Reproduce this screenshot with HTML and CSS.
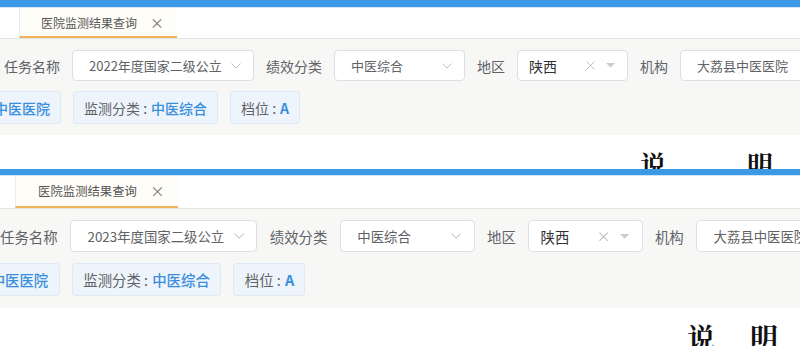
FILE: index.html
```html
<!DOCTYPE html>
<html lang="zh-CN">
<head>
    <meta charset="UTF-8">
    <meta name="viewport" content="width=device-width, initial-scale=1.0">
    <title>医院监测结果查询</title>
    <link rel="stylesheet" href="styles.css">
</head>
<body>
    <!-- 2022 -->
    <section class="panel panel-a">
        <div class="topbar"></div>
        <div class="tabbar">
            <div class="tab"><span>医院监测结果查询</span><span class="tab-close">×</span></div>
        </div>
        <div class="query">
            <div class="filters">
                <label class="filter-label">任务名称</label>
                <div class="select select-task">
                    <span class="select-value">2022年度国家二级公立</span>
                    <svg class="chevron" width="10" height="6" viewBox="0 0 10 6"><polyline points="0.5,0.5 5,5 9.5,0.5"/></svg>
                </div>
                <label class="filter-label">绩效分类</label>
                <div class="select select-type">
                    <span class="select-value">中医综合</span>
                    <svg class="chevron" width="10" height="6" viewBox="0 0 10 6"><polyline points="0.5,0.5 5,5 9.5,0.5"/></svg>
                </div>
                <label class="filter-label">地区</label>
                <div class="select select-area">
                    <span class="select-value is-set">陕西</span>
                    <svg class="clear" width="9" height="9" viewBox="0 0 9 9"><line x1="0.5" y1="0.5" x2="8.5" y2="8.5"/><line x1="8.5" y1="0.5" x2="0.5" y2="8.5"/></svg>
                    <svg class="caret" width="9" height="5" viewBox="0 0 9 5"><polygon points="0,0 9,0 4.5,4.5"/></svg>
                </div>
                <label class="filter-label">机构</label>
                <div class="select select-org">
                    <span class="select-value">大荔县中医医院</span>
                </div>
            </div>
            <div class="tags">
                <span class="tag">机构 : <b>大荔县中医医院</b></span>
                <span class="tag">监测分类 : <b>中医综合</b></span>
                <span class="tag">档位 : <b class="grade">A</b></span>
            </div>
        </div>
        <div class="notes"><span>说</span><span>明</span></div>
    </section>

    <!-- 2023 -->
    <section class="panel panel-b">
        <div class="topbar"></div>
        <div class="tabbar">
            <div class="tab"><span>医院监测结果查询</span><span class="tab-close">×</span></div>
        </div>
        <div class="query">
            <div class="filters">
                <label class="filter-label">任务名称</label>
                <div class="select select-task">
                    <span class="select-value">2023年度国家二级公立</span>
                    <svg class="chevron" width="10" height="6" viewBox="0 0 10 6"><polyline points="0.5,0.5 5,5 9.5,0.5"/></svg>
                </div>
                <label class="filter-label">绩效分类</label>
                <div class="select select-type">
                    <span class="select-value">中医综合</span>
                    <svg class="chevron" width="10" height="6" viewBox="0 0 10 6"><polyline points="0.5,0.5 5,5 9.5,0.5"/></svg>
                </div>
                <label class="filter-label">地区</label>
                <div class="select select-area">
                    <span class="select-value is-set">陕西</span>
                    <svg class="clear" width="9" height="9" viewBox="0 0 9 9"><line x1="0.5" y1="0.5" x2="8.5" y2="8.5"/><line x1="8.5" y1="0.5" x2="0.5" y2="8.5"/></svg>
                    <svg class="caret" width="9" height="5" viewBox="0 0 9 5"><polygon points="0,0 9,0 4.5,4.5"/></svg>
                </div>
                <label class="filter-label">机构</label>
                <div class="select select-org">
                    <span class="select-value">大荔县中医医院</span>
                </div>
            </div>
            <div class="tags">
                <span class="tag">机构 : <b>大荔县中医医院</b></span>
                <span class="tag">监测分类 : <b>中医综合</b></span>
                <span class="tag">档位 : <b class="grade">A</b></span>
            </div>
        </div>
        <div class="notes"><span>说</span><span>明</span></div>
    </section>
</body>
</html>
```

FILE: styles.css
```css
* {
    margin: 0;
    padding: 0;
    box-sizing: border-box;
}
body {
    width: 800px;
    height: 346px;
    overflow: hidden;
    background: white;
    font-family: 'Noto Sans CJK SC', 'Noto Sans', sans-serif;
    color: #606266;
}
.panel {
    overflow: hidden;
    background: white;
}
.panel-a {
    height: 169px;
}
.panel-b {
    height: 177px;
}
.topbar {
    background: #3b99e6;
}
.panel-a .topbar {
    height: 8px;
    border-bottom: 1px solid #cfe5f8;
}
.panel-b .topbar {
    height: 7px;
    border-bottom: 1px solid #cfe5f8;
}

/* tab strip */
.tabbar {
    height: 32px;
    display: flex;
    border-bottom: 1px solid #e4e4e4;
}
.panel-a .tabbar {
    height: 31px;
    padding-left: 19px;
}
.panel-b .tabbar {
    zoom: 1.03;
    padding-left: 15px;
}
.tab {
    width: 158px;
    display: flex;
    align-items: center;
    padding-left: 21px;
    font-size: 12px;
    color: #555;
    background: #fffdf8;
    border-left: 1px solid #ececec;
    border-bottom: 2px solid #f0b25c;
}
.tab-close {
    margin-left: 13px;
    font-size: 14px;
    color: #777;
}

/* query area */
.query {
    background: #f7f7f6;
    padding: 11px 0 11px;
}
.filters {
    display: flex;
    align-items: center;
    gap: 12px;
    height: 31px;
    white-space: nowrap;
}
.panel-a .filters {
    margin-left: 4px;
}
.panel-b .query {
    zoom: 1.03;
}
.filter-label {
    font-size: 14px;
    color: #606266;
}
.select {
    height: 31px;
    display: flex;
    align-items: center;
    padding: 0 12px 0 16px;
    background: white;
    border: 1px solid #dcdfe6;
    border-radius: 4px;
    flex-shrink: 0;
}
.select-value {
    flex: 1;
    font-size: 13px;
    color: #606266;
    overflow: hidden;
}
.select-value.is-set {
    font-size: 14px;
    color: #303133;
}
.select-task {
    width: 182px;
}
.select-type {
    width: 131px;
}
.select-area {
    width: 111px;
    padding-left: 11px;
}
.select-org {
    width: 150px;
}
.chevron polyline {
    fill: none;
    stroke: #c0c4cc;
    stroke-width: 1;
}
.clear {
    margin-right: 11px;
}
.clear line {
    stroke: #b8bcc4;
    stroke-width: 1;
}
.caret polygon {
    fill: #c8ccd3;
}

/* selected tags */
.tags {
    display: flex;
    gap: 12px;
    margin-top: 10px;
    margin-left: -98px;
    white-space: nowrap;
}
.panel-b .tags {
    margin-left: -101px;
}
.tag {
    height: 33px;
    display: flex;
    align-items: center;
    padding: 0 10px;
    font-size: 14px;
    color: #606266;
    background: #edf4fb;
    border: 1px solid #dde9f4;
    border-radius: 3px;
}
.tag b {
    margin-left: 4px;
    font-weight: 500;
    color: #3a8ede;
}
.tag b.grade {
    font-weight: 700;
}

/* notes heading */
.notes {
    display: flex;
    font-family: 'Noto Serif CJK SC', 'Noto Sans CJK SC', serif;
    font-weight: 700;
    line-height: 1;
    color: #111;
}
.panel-a .notes {
    padding: 16px 0 0 640px;
    gap: 81px;
    font-size: 26px;
}
.panel-b .notes {
    padding: 15px 0 0 687px;
    gap: 35px;
    font-size: 28px;
}
```
